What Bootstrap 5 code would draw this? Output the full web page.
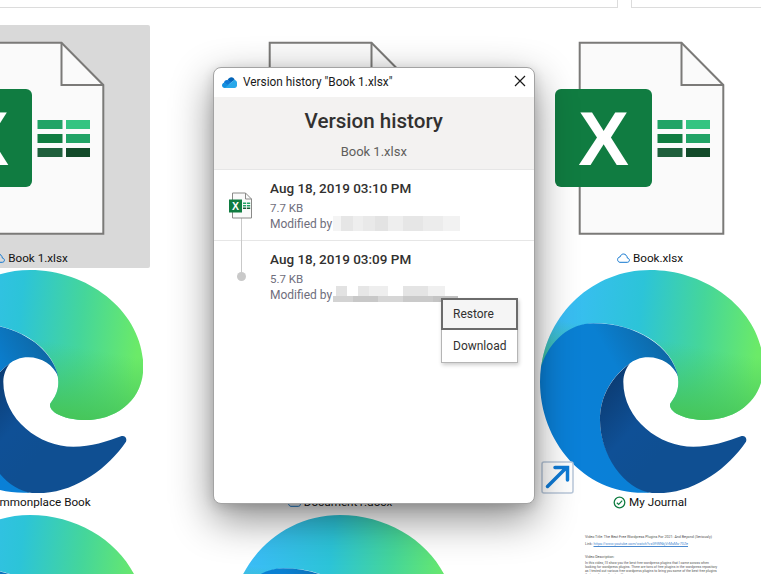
<!DOCTYPE html>
<html lang="en">
<head>
<meta charset="utf-8">
<title>Version history</title>
<link href="https://cdn.jsdelivr.net/npm/bootstrap@5.3.0/dist/css/bootstrap.min.css" rel="stylesheet">
<style>
html,body{width:761px;height:574px;overflow:hidden;background:#fff;margin:0}
body{font-family:Roboto,"Noto Sans",sans-serif;font-size:12px;color:#1a1a1a;position:relative}
.topstrip{height:8px;gap:13px}
.topstrip>div{border:1px solid #dcdcdc;border-top:0}
.strip-a{width:618px;border-left:0!important}
.strip-b{flex:1;border-right:0!important}
.deskgrid{display:grid;grid-template-columns:repeat(3,240px);column-gap:70px;row-gap:2px;grid-auto-rows:243px;margin:17px 0 0 -90px;width:860px}
.tile{border-radius:2px;line-height:16px;white-space:nowrap}
.tile>svg{display:block;flex:none}
.tile-sel{background:#d9d9d9}
.tilename{height:16px;gap:3px;color:#111;margin-top:1px;font-size:11.7px}
.docthumb{padding:20px 0 0 55px;font-size:3.65px;line-height:4px;color:#555;white-space:normal;overflow:hidden;height:59px}
.docthumb p{margin:0;width:134px}
.docthumb a{color:#4a8ad0}
.gap-a{margin-top:2.6px!important}
.gap-b{margin-top:9px!important}
.gap-c{margin-top:2px!important;font-size:3.4px}
.shortcut{position:absolute;left:540.5px;top:461px;width:33px;height:33px;display:block}
.dlg{position:absolute;left:213px;top:67px;width:321.5px;height:437px;border:1px solid #a3a3a3;border-radius:8px;background:#fff;box-shadow:0 15px 42px rgba(0,0,0,.46),0 3px 12px rgba(0,0,0,.14);overflow:visible}
.dlgbar{height:29px;padding:0 8px;gap:6px;font-size:11.85px;color:#1a1a1a}
.dlgclose{margin-left:auto;padding:0 0 4px;border:0;background:none;line-height:0}
.dlghead{height:73px;background:#f3f2f1;border-bottom:1px solid #e6e6e6;padding-top:11px}
.dlghead h1{font-size:20.6px;font-weight:500;color:#323130;line-height:27px;margin:0}
.dlghead p{font-size:13px;line-height:19px;color:#605e5c;margin:7px 0 0}
.dlg>.list-group{border:0}
.vrow.list-group-item{height:71px;padding:9px 0 0 56px;border-color:#e6e6e6;background:transparent}
.vtime{font-size:13.5px;font-weight:500;color:#323130;line-height:19px}
.vmeta{font-size:11.5px;color:#6f6e7c;line-height:16px;margin-top:2px}
.vby{height:16px;line-height:16px;color:#6f6e7c}
.smudge{display:inline-block;width:127px;height:15px;margin-left:1px;vertical-align:top;filter:blur(.7px)}
.smudge-a{background:linear-gradient(90deg,#f4f4f4 0 8px,#e6e6e6 8px 20px,#eeeeee 20px 30px,#e9e9e9 30px 42px,#e3e3e3 42px 55px,#eeeeee 55px 70px,#e6e6e6 70px 90px,#ececec 90px 110px,#f2f2f2 110px)}
.smudge-b{height:17px;margin-top:-1px;background:linear-gradient(90deg,#d3d3d3 0 20px,#c8c8c8 20px 45px,#d6d6d6 45px 70px,#cacaca 70px 100px,#c4c4c4 100px 125px,#fff 125px) 0 10px/100% 6px no-repeat,linear-gradient(90deg,#fff 0 3px,#e2e2e2 3px 14px,#fff 14px 25px,#e6e6e6 25px 36px,#eeeeee 36px 55px,#fff 55px 70px,#e4e4e4 70px 95px,#f0f0f0 95px 112px,#fff 112px) 0 0/100% 10px no-repeat}
.vline{position:absolute;left:27px;top:150px;width:1px;height:60px;background:#c9c9c9}
.vdot{position:absolute;left:23px;top:204px;width:9px;height:9px;border-radius:50%;background:#c9c9c9}
.vicon{position:absolute;left:14px;top:124px;display:block}
.ctxmenu.dropdown-menu{position:absolute;display:block;left:227px;top:230px;width:77px;min-width:0;height:65px;padding:0;border:1px solid #b5b5b5;border-radius:0;box-shadow:1px 2px 4px rgba(0,0,0,.2);font-size:12px}
.ctxmenu .dropdown-item{height:32px;line-height:29px;padding:0 11px;color:#323130}
.ctxmenu .ctxfocus{background:#f5f5f5;border:2px solid #6b6b6b;padding:0 10px;margin:-1px -1px 0;width:77px}
.ctxmenu .ctxplain{line-height:33px;height:32px}
</style>
</head>
<body>
<svg width="0" height="0" class="position-absolute">
<defs>
<linearGradient id="eTop" gradientUnits="userSpaceOnUse" x1="60" y1="190" x2="680" y2="260"><stop offset="0" stop-color="#3cbcf9"/><stop offset=".42" stop-color="#2cc4d8"/><stop offset=".72" stop-color="#45d69a"/><stop offset="1" stop-color="#6bea68"/></linearGradient>
<linearGradient id="eTop2" gradientUnits="userSpaceOnUse" x1="560" y1="240" x2="520" y2="450"><stop offset="0" stop-color="#46c65a" stop-opacity="0"/><stop offset="1" stop-color="#46c65a"/></linearGradient>
<linearGradient id="eMid" gradientUnits="userSpaceOnUse" x1="90" y1="420" x2="420" y2="230"><stop offset="0" stop-color="#0a80d8"/><stop offset=".55" stop-color="#0a80d2"/><stop offset="1" stop-color="#0e66a2"/></linearGradient>
<linearGradient id="eWave" gradientUnits="userSpaceOnUse" x1="215" y1="330" x2="420" y2="520"><stop offset="0" stop-color="#0b3a70"/><stop offset=".6" stop-color="#0f5096"/><stop offset="1" stop-color="#0f4f92"/></linearGradient>
<symbol id="edgeLogo" viewBox="0 0 700 670">
<path fill="url(#eTop)" d="M33 300C50 130 190 0 360 0C540 0 700 130 700 290C700 390 620 450 525 450C470 450 420 430 420 405C420 395 445 380 445 335C445 250 340 160 195 160C120 160 55 220 33 300Z"/>
<path fill="url(#eTop2)" d="M33 300C50 130 190 0 360 0C540 0 700 130 700 290C700 390 620 450 525 450C470 450 420 430 420 405C420 395 445 380 445 335C445 250 340 160 195 160C120 160 55 220 33 300Z"/>
<path fill="url(#eMid)" d="M33 290C60 210 120 160 190 160C320 160 425 230 445 320C430 285 395 262 355 262C330 262 312 270 296 283C235 330 210 390 210 450C210 550 280 640 360 668C170 680 30 520 30 335C30 320 31 305 33 290Z"/>
<path fill="url(#eWave)" d="M300 280C235 330 210 390 210 450C210 560 290 670 380 670C490 670 590 600 648 515C652 505 645 496 635 498C590 515 545 530 490 530C390 530 280 450 280 335C280 315 288 295 300 280Z"/>
</symbol>
<symbol id="sheetLogo" viewBox="0 0 240 224">
<path fill="#fafafa" stroke="#7b7a78" stroke-width="2" d="M49.700 17.700H151.500L193.300 60V208.700H49.700Z"/>
<path fill="none" stroke="#7b7a78" stroke-width="2" d="M151.500 17.700V60H193.300"/>
<rect x="25" y="64" width="97" height="98" rx="6" fill="#107c41"/>
<text x="73.500" y="140" text-anchor="middle" font-family="Liberation Sans" font-weight="700" font-size="76" fill="#fff">X</text>
<rect x="127.500" y="95" width="25" height="9" fill="#21a366"/><rect x="156" y="95" width="24" height="9" fill="#33c481"/>
<rect x="127.500" y="109" width="25" height="9" fill="#107c41"/><rect x="156" y="109" width="24" height="9" fill="#21a366"/>
<rect x="127.500" y="123" width="25" height="9" fill="#1f5f3c"/><rect x="156" y="123" width="24" height="9" fill="#124a2a"/>
</symbol>
<symbol id="cloudLine" viewBox="0 0 13 10"><path fill="none" stroke="#1277cf" stroke-width="1" d="M3 9.300H10.300C11.600 9.300 12.400 8.300 12.400 7.200C12.400 6.100 11.600 5.200 10.400 5.100C10.100 2.900 8.500 1 6.500 1C4.900 1 3.500 2.200 3.100 3.900C1.600 4 .6 5.200 .6 6.600C.6 8.100 1.700 9.300 3 9.300Z"/></symbol>
</defs>
</svg>

<div class="d-flex topstrip"><div class="strip-a"></div><div class="strip-b"></div></div>

<div class="deskgrid">
  <div class="tile tile-sel d-flex flex-column align-items-center">
    <svg class="align-self-start" width="240" height="224"><use href="#sheetLogo"/></svg>
    <div class="tilename d-flex align-items-center"><svg width="13" height="10"><use href="#cloudLine"/></svg><span>Book 1.xlsx</span></div>
  </div>
  <div class="tile d-flex flex-column align-items-center">
    <svg class="align-self-start" width="240" height="224"><use href="#sheetLogo"/></svg>
  </div>
  <div class="tile d-flex flex-column align-items-center">
    <svg class="align-self-start" width="240" height="224"><use href="#sheetLogo"/></svg>
    <div class="tilename d-flex align-items-center"><svg width="13" height="10"><use href="#cloudLine"/></svg><span>Book.xlsx</span></div>
  </div>

  <div class="tile d-flex flex-column align-items-center">
    <svg class="align-self-start" width="233.300" height="223.300"><use href="#edgeLogo"/></svg>
    <div class="tilename d-flex align-items-center"><svg width="13" height="10"><use href="#cloudLine"/></svg><span>Commonplace Book</span></div>
  </div>
  <div class="tile d-flex flex-column align-items-center">
    <svg class="align-self-start" width="233.300" height="223.300"><use href="#edgeLogo"/></svg>
    <div class="tilename d-flex align-items-center"><svg width="13" height="10"><use href="#cloudLine"/></svg><span>Document1.docx</span></div>
  </div>
  <div class="tile d-flex flex-column align-items-center">
    <svg class="align-self-start" width="233.300" height="223.300"><use href="#edgeLogo"/></svg>
    <div class="tilename d-flex align-items-center"><svg width="13" height="13" viewBox="0 0 13 13"><circle cx="6.500" cy="6.500" r="5.300" fill="none" stroke="#107c41" stroke-width="1.300"/><path d="M3.800 6.700L5.700 8.500L9.200 4.700" fill="none" stroke="#107c41" stroke-width="1.200"/></svg><span>My Journal</span></div>
  </div>

  <div class="tile"><svg width="233.300" height="223.300"><use href="#edgeLogo"/></svg></div>
  <div class="tile"><svg width="233.300" height="223.300"><use href="#edgeLogo"/></svg></div>
  <div class="tile docthumb">
    <p>Video Title: The Best Free Wordpress Plugins For 2021: And Beyond (Seriously)</p>
    <p class="gap-a">Link: <a href="#">https://www.youtube.com/watch?v=G9WNkjVrMsMs-70Ze</a></p>
    <p class="gap-b">Video Description:</p>
    <p class="gap-c">In this video, I'll show you the best free wordpress plugins that I came across when looking for wordpress plugins. There are tons of free plugins in the wordpress repository as I tested out various free wordpress plugins to bring you some of the best free plugins that wordpress has to offer.</p>
  </div>
</div>

<svg class="shortcut" viewBox="0 0 33 33">
  <rect x="1" y="1" width="31" height="31" rx="2" fill="#fff" stroke="#b9c8da" stroke-width="1.500"/>
  <path d="M6.500 25.500L25 7M14 6.500H26.500V19" fill="none" stroke="#0f7bd6" stroke-width="3.500" stroke-linecap="round"/>
</svg>

<div class="card dlg">
  <div class="dlgbar d-flex align-items-center">
    <svg width="15" height="11" viewBox="0 0 15 11"><path fill="#0364b8" d="M5.700 2.800C6.500 1.200 8 .3 9.300.3C11 .3 12.300 1.400 12.700 3.100L8 6Z"/><path fill="#0f78d4" d="M5.500 3C3.800 2.700 2 4 2 6L6 8.500L9.500 5Z"/><path fill="#1490df" d="M2.800 11C1.200 11 0 9.700 0 8.300C0 7 .8 6 2 5.700L8 8.500L6 11Z"/><path fill="#28a8ea" d="M12.400 3C14 3 15 4.400 15 5.900V8.300C15 9.800 14 11 12.500 11H2.800L12 3Z"/></svg>
    <span>Version history "Book 1.xlsx"</span>
    <button class="dlgclose" type="button" aria-label="Close"><svg width="12" height="12" viewBox="0 0 12 12"><path d="M1 1L11 11M11 1L1 11" stroke="#1a1a1a" stroke-width="1.200"/></svg></button>
  </div>
  <div class="dlghead text-center">
    <h1>Version history</h1>
    <p>Book 1.xlsx</p>
  </div>
  <div class="list-group list-group-flush">
    <div class="list-group-item vrow">
      <div class="vtime">Aug 18, 2019 03:10 PM</div>
      <div class="vmeta">7.7 KB</div>
      <div class="vby">Modified by<span class="smudge smudge-a"></span></div>
    </div>
    <div class="list-group-item vrow">
      <div class="vtime">Aug 18, 2019 03:09 PM</div>
      <div class="vmeta">5.7 KB</div>
      <div class="vby">Modified by<span class="smudge smudge-b"></span></div>
    </div>
  </div>
  <div class="vline"></div>
  <div class="vdot"></div>
  <svg class="vicon" width="25" height="27" viewBox="0 0 25 27">
    <path d="M4.500 1H17.500L23.500 7V26H4.500Z" fill="#fafafa" stroke="#8a8a88"/>
    <path d="M17.500 1V7H23.500" fill="none" stroke="#8a8a88"/>
    <rect x="1" y="7.500" width="13" height="13" fill="#107c41"/>
    <text x="7.500" y="18" text-anchor="middle" font-family="Liberation Sans" font-weight="700" font-size="10.500" fill="#fff">X</text>
    <path d="M15 10.500h3.200v1.400H15zM19 10.500h3.200v1.400H19zM15 13h3.200v1.400H15zM19 13h3.200v1.400H19z" fill="#21a366"/>
    <path d="M15 15.500h3.200v1.400H15zM19 15.500h3.200v1.400H19z" fill="#185c37"/>
  </svg>
  <div class="dropdown-menu ctxmenu">
    <a class="dropdown-item ctxfocus" href="#">Restore</a>
    <a class="dropdown-item ctxplain" href="#">Download</a>
  </div>
</div>
<script src="https://cdn.jsdelivr.net/npm/bootstrap@5.3.0/dist/js/bootstrap.bundle.min.js"></script>
</body>
</html>
